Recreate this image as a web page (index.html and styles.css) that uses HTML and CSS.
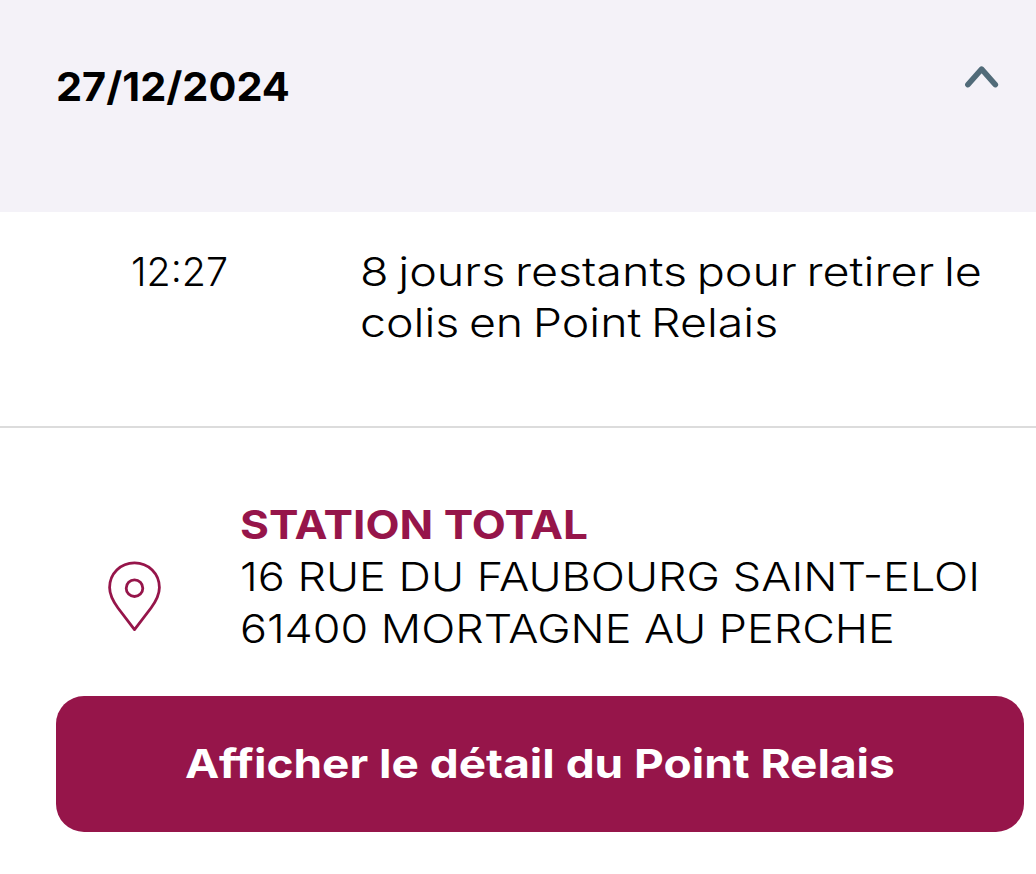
FILE: index.html
```html
<!DOCTYPE html>
<html lang="fr">
<head>
    <meta charset="UTF-8">
    <meta name="viewport" content="width=device-width, initial-scale=1.0">
    <title>Suivi de colis</title>
    <link rel="stylesheet" href="styles.css">
</head>
<body>
    <header class="day">
        <h2 class="day-date">27/12/2024</h2>
        <svg class="chevron" width="36" height="28" viewBox="0 0 36 28">
            <path d="M3.9 22.6 L17.6 7.2 L31.3 22.6"/>
        </svg>
    </header>
    <main>
        <section class="event">
            <time class="event-time"><span class="wide time-text">12:27</span></time>
            <p class="event-label">
                <span class="wide label-first">8 jours restants pour retirer le</span><br>
                <span class="wide label-second">colis en Point Relais</span>
            </p>
        </section>
        <section class="relay">
            <svg class="pin" width="56" height="74" viewBox="0 0 56 74">
                <path d="M28.5 70.6 L12 49 C6.5 41.5 3.6 36 3.6 28.5 C3.6 14.5 14.5 3.8 28.5 3.8 C42.5 3.8 53.4 14.5 53.4 28.5 C53.4 36 50.5 41.5 45 49 Z"/>
                <circle cx="28.5" cy="29.2" r="8.3"/>
            </svg>
            <address class="relay-address">
                <strong class="wide relay-name">STATION TOTAL</strong><br>
                <span class="wide street">16 RUE DU FAUBOURG SAINT-ELOI</span><br>
                <span class="wide city">61400 MORTAGNE AU PERCHE</span>
            </address>
        </section>
        <button class="relay-button"><span class="wide button-text">Afficher le détail du Point Relais</span></button>
    </main>
</body>
</html>
```

FILE: styles.css
```css
* {
    margin: 0;
    padding: 0;
    box-sizing: border-box;
}

body {
    font-family: Inter, "Open Sans", sans-serif;
    font-size: 40px;
    font-weight: 300;
    color: #000;
    background-color: #fff;
    overflow: hidden;
}

/* widened lettering */
.wide {
    display: inline-block;
    transform-origin: left center;
}

.day {
    display: flex;
    justify-content: space-between;
    align-items: flex-start;
    height: 212px;
    padding: 62px 36px 0 56px;
    background-color: #f4f2f8;
}

.day-date {
    font-size: 40px;
    font-weight: 700;
    line-height: 50px;
    transform: scaleX(1.036);
    transform-origin: left center;
}

.chevron {
    fill: none;
    stroke: #516b79;
    stroke-width: 5.6;
    stroke-linecap: round;
    stroke-linejoin: round;
}

.event {
    display: flex;
    height: 216px;
    padding: 35px 0 0 131px;
    border-bottom: 2px solid #dcdcdc;
    line-height: 50.5px;
    white-space: nowrap;
}

.event-time {
    width: 229px;
}

.event-label {
    word-spacing: -3px;
}

.time-text {
    transform: scaleX(0.985);
}

.label-first {
    transform: scaleX(1.168);
}

.label-second {
    transform: scaleX(1.163);
}

.relay {
    display: flex;
    align-items: center;
    height: 268px;
    padding: 70px 0 41px 106px;
    line-height: 52px;
    white-space: nowrap;
}

.pin {
    margin-top: 38px;
    margin-right: 78px;
    fill: none;
    stroke: #96154a;
    stroke-width: 2.8;
    stroke-linejoin: round;
}

.relay-address {
    font-style: normal;
}

.relay-name {
    font-weight: 700;
    color: #96154a;
    transform: scaleX(1.105);
}

.street {
    transform: scaleX(1.125);
}

.city {
    transform: scaleX(1.121);
}

.relay-button {
    display: block;
    width: 968px;
    height: 136px;
    margin-left: 56px;
    padding-bottom: 2px;
    border: none;
    border-radius: 28px;
    background-color: #96154a;
    color: #fff;
    font-family: inherit;
    font-size: 40px;
    font-weight: 700;
    cursor: pointer;
}

.button-text {
    transform: scaleX(1.149);
    transform-origin: center;
}
```
